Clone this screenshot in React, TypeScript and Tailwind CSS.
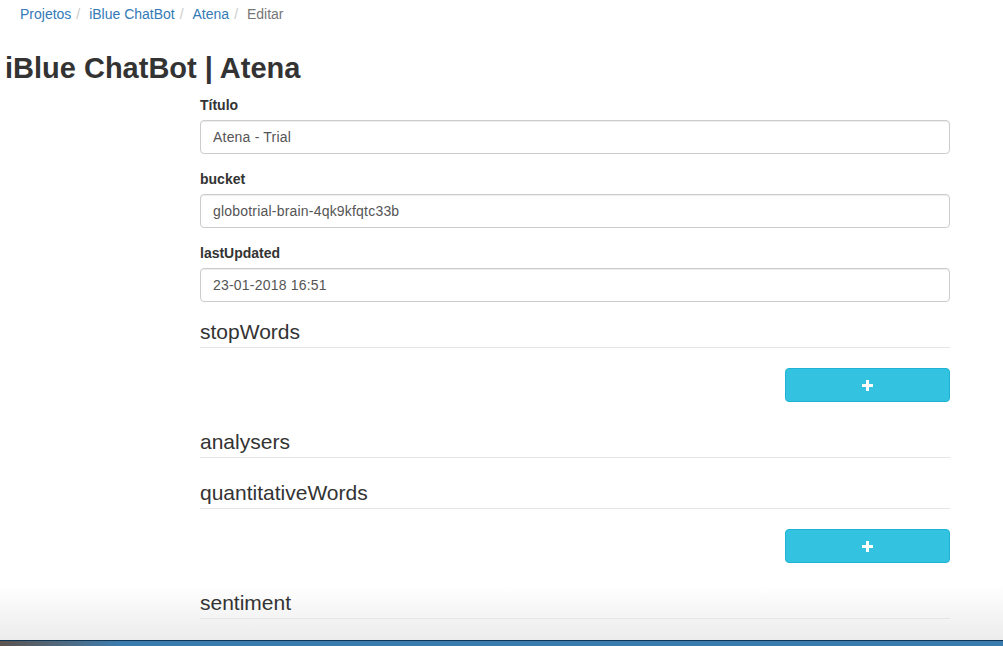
export default function App() {
  const font = { fontFamily: '"Liberation Sans", Arial, sans-serif' };
  return (
    <div
      className="relative h-[646px] w-[1003px] overflow-hidden bg-[linear-gradient(to_bottom,#fff_585px,#ececec_640px)] text-[#333]"
      style={font}
    >
      {/* Breadcrumb */}
      <ol className="flex pl-[20px] pt-[4px] text-[14px] leading-[20px]">
        <li className="text-[#337ab7]">Projetos</li>
        <Sep />
        <li className="text-[#337ab7]">iBlue ChatBot</li>
        <Sep />
        <li className="text-[#337ab7]">Atena</li>
        <Sep />
        <li className="text-[#777]">Editar</li>
      </ol>

      <h1 className="ml-[5px] mt-[28px] text-[29px] font-bold leading-[33px]">iBlue ChatBot | Atena</h1>

      <form className="ml-[200px] mt-[10px] w-[750px]">
        <Field label="Título" value="Atena - Trial" />
        <Field label="bucket" value="globotrial-brain-4qk9kfqtc33b" />
        <Field label="lastUpdated" value="23-01-2018 16:51" />

        <Legend>stopWords</Legend>
        <AddButton />

        <Legend>analysers</Legend>
        <Legend>quantitativeWords</Legend>
        <AddButton />

        <Legend>sentiment</Legend>
      </form>

      {/* dock strip from the screenshot */}
      <div className="absolute bottom-0 left-0 h-[6px] w-full border-t border-[#0f3553] bg-gradient-to-r from-[#5b5450] via-[#3a7cae] via-[12%] to-[#3a7cae]" />
    </div>
  );
}

function Sep() {
  return <li className="whitespace-pre px-[5px] text-[#ccc]">{"/\u00a0"}</li>;
}

function Field({ label, value }: { label: string; value: string }) {
  return (
    <div className="mb-[15px]">
      <label className="mb-[5px] block text-[14px] font-bold leading-[20px]">{label}</label>
      <input
        readOnly
        value={value}
        className="block h-[34px] w-full rounded-[4px] border border-[#ccc] px-[12px] text-[14px] tracking-[0.2px] text-[#555] shadow-[inset_0_1px_1px_rgba(0,0,0,0.075)] outline-none"
        style={{ fontFamily: '"Liberation Sans", Arial, sans-serif' }}
      />
    </div>
  );
}

function Legend({ children }: { children: string }) {
  return (
    <div className="mb-[20px] border-b border-[#e5e5e5] text-[21px] leading-[30px]">{children}</div>
  );
}

function AddButton() {
  return (
    <div className="mb-[25px] flex justify-end">
      <button
        type="button"
        className="flex h-[34px] w-[165px] items-center justify-center rounded-[4px] border border-[#1eb3d4] bg-[#33c3e0]"
      >
        <svg width="13" height="13" viewBox="0 0 13 13">
          <path d="M6.5 1v11M1 6.5h11" stroke="#fff" strokeWidth="3" />
        </svg>
      </button>
    </div>
  );
}
